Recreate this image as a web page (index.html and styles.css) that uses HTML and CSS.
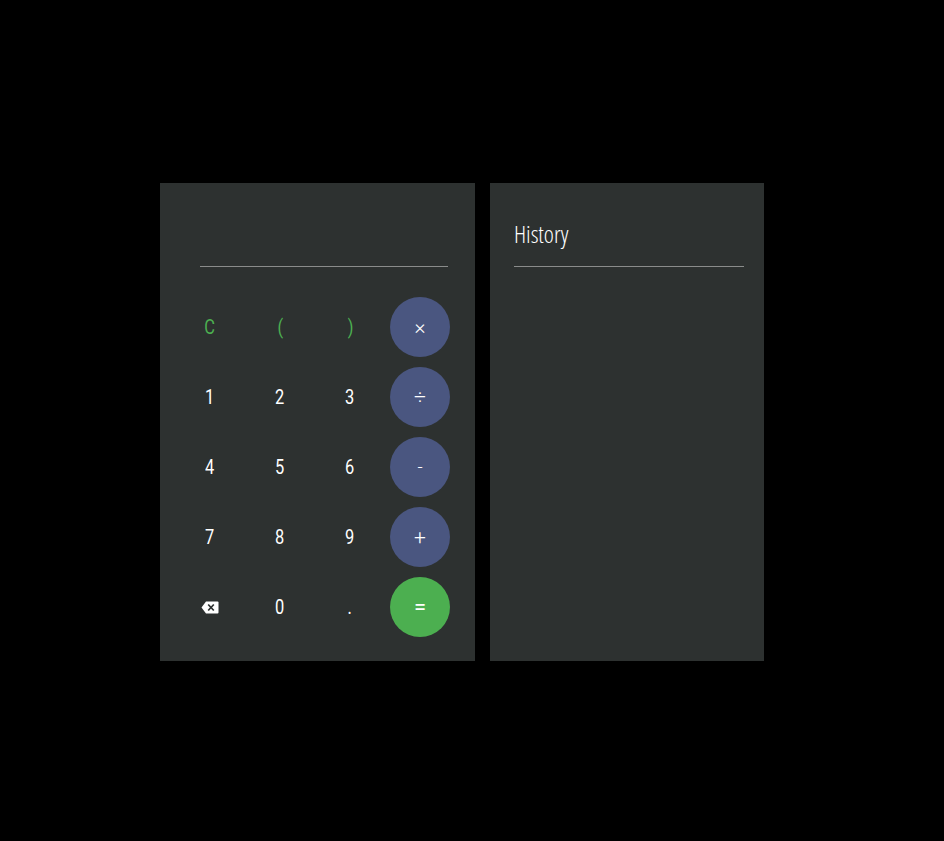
FILE: index.html
```html
<!DOCTYPE html>
<html lang="en">
<head>
  <meta charset="UTF-8" />
  <meta name="viewport" content="width=device-width, initial-scale=1.0"/>
  <title>Calculator</title>
  <link rel="stylesheet" href="styles.css">
</head>
<body>

<div class="app">
  <div class="calc">
    <div class="display"></div>
    <div class="keys">
      <button class="key green"><span>C</span></button>
      <button class="key green"><span>(</span></button>
      <button class="key green"><span>)</span></button>
      <button class="key op"><span>×</span></button>

      <button class="key"><span>1</span></button>
      <button class="key"><span>2</span></button>
      <button class="key"><span>3</span></button>
      <button class="key op"><span>÷</span></button>

      <button class="key"><span>4</span></button>
      <button class="key"><span>5</span></button>
      <button class="key"><span>6</span></button>
      <button class="key op"><span class="minus">-</span></button>

      <button class="key"><span>7</span></button>
      <button class="key"><span>8</span></button>
      <button class="key"><span>9</span></button>
      <button class="key op"><span>+</span></button>

      <button class="key" aria-label="Backspace">
        <svg class="back-icon" viewBox="0 0 18 13" width="18" height="13">
          <path fill="#fff" d="M5 0.5H16.5A1 1 0 0 1 17.5 1.5V11.5A1 1 0 0 1 16.5 12.5H5L0.5 6.5Z"/>
          <path stroke="#2d3130" stroke-width="1.7" fill="none" d="M7.2 3.5L12.8 9.5M12.8 3.5L7.2 9.5"/>
        </svg>
      </button>
      <button class="key"><span>0</span></button>
      <button class="key"><span>.</span></button>
      <button class="key equals"><span>=</span></button>
    </div>
  </div>

  <div class="history">
    <h3>History</h3>
  </div>
</div>

</body>
</html>
```

FILE: styles.css
```css
body {
  margin: 0;
  background: #000;
  font-family: 'Roboto', sans-serif;
}

.app {
  display: flex;
  gap: 15px;
  padding: 183px 0 0 160px;
}

.calc, .history {
  background: #2d3130;
  height: 478px;
}

.calc {
  width: 315px;
  padding: 0 25px 0 20px;
  box-sizing: border-box;
}

.display {
  height: 84px;
  margin: 0 2px 30px 20px;
  border-bottom: 1px solid #8a8c8b;
  box-sizing: border-box;
}

.keys {
  display: grid;
  grid-template-columns: repeat(4, 60px);
  grid-auto-rows: 60px;
  gap: 10px;
}

.key {
  padding: 0 0 1px;
  border: none;
  background: none;
  color: #fff;
  font-family: 'Roboto', sans-serif;
  font-size: 20px;
  display: flex;
  align-items: center;
  justify-content: center;
}

.key span {
  display: block;
  transform: scaleX(0.82);
}

.key.green {
  color: #4caf50;
}

.key.op {
  background: #4a5680;
  border-radius: 50%;
}

.key.equals {
  background: #4caf50;
  border-radius: 50%;
}

.key.op span {
  font-size: 21px;
  font-weight: 300;
  transform: none;
}

.key.op .minus {
  font-size: 18px;
}

.key.equals span {
  font-size: 22px;
  transform: none;
}

.back-icon {
  display: block;
  margin-top: 1px;
}

.history {
  width: 274px;
  padding: 0 20px 0 24px;
  box-sizing: border-box;
}

.history h3 {
  margin: 0;
  height: 84px;
  box-sizing: border-box;
  padding-top: 36px;
  border-bottom: 1px solid #8a8c8b;
  color: #fff;
  font-family: 'Open Sans', sans-serif;
  font-size: 24px;
  line-height: 30px;
  font-weight: 300;
  font-stretch: condensed;
}
```
